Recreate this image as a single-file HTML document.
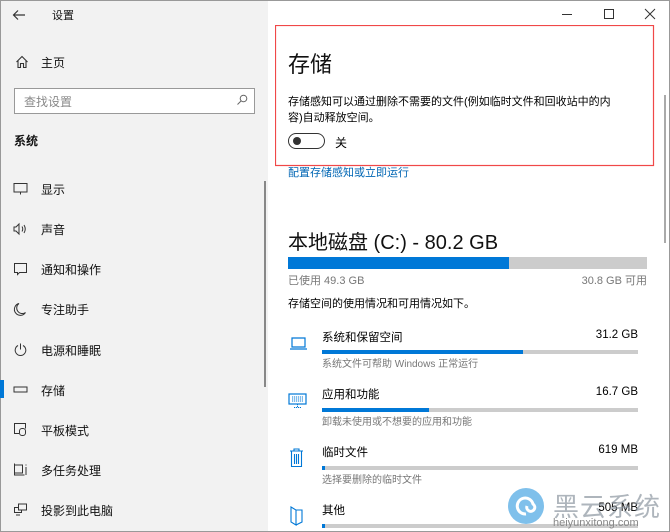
<!DOCTYPE html>
<html><head><meta charset="utf-8"><style>
*{margin:0;padding:0;box-sizing:border-box}
body{width:670px;height:532px;overflow:hidden;font-family:"Liberation Sans","Noto Sans CJK SC",sans-serif;background:#fff;position:relative;color:#000}
.a{position:absolute;white-space:nowrap}
#left{position:absolute;left:0;top:0;width:268px;height:532px;background:#f2f2f2}
.nav{font-size:12px;color:#111}
.g{color:#777}
.bar{position:absolute;height:4px;background:#ccc}
.bar i{position:absolute;left:0;top:0;height:4px;background:#0078d7}
svg{position:absolute}
</style></head><body>
<div id="left"></div>
<div class="a" style="left:0;top:0;width:670px;height:532px;border:1px solid #999;"></div>
<svg style="left:12px;top:8px" width="14" height="14" viewBox="0 0 14 14"><path d="M13 7H2M6 2.5L1.5 7 6 11.5" stroke="#333" stroke-width="1.2" fill="none"/></svg>
<div class="a nav" style="left:52px;top:7px;font-size:11px">设置</div>
<svg style="left:15px;top:55px" width="14" height="14" viewBox="0 0 14 14"><path d="M1.5 7L7 1.5 12.5 7M3 5.5V12.5H5.5V8.5H8.5V12.5H11V5.5" stroke="#333" stroke-width="1.1" fill="none"/></svg>
<div class="a nav" style="left:41px;top:54px">主页</div>
<div class="a" style="left:14px;top:88px;width:241px;height:26px;border:1px solid #999;background:#fff"></div>
<div class="a g" style="left:24px;top:93px;font-size:12px;color:#888">查找设置</div>
<svg style="left:236px;top:94px" width="12" height="12" viewBox="0 0 12 12"><circle cx="7.5" cy="4.5" r="3.3" stroke="#666" fill="none"/><path d="M5 7L1.5 10.5" stroke="#666"/></svg>
<div class="a nav" style="left:14px;top:132px;font-weight:bold">系统</div>
<div class="a" style="left:264px;top:181px;width:2px;height:206px;background:#888"></div>
<div class="a" style="left:0;top:380px;width:4px;height:18px;background:#0078d7"></div>
<svg style="left:13px;top:182px" width="16" height="14" viewBox="0 0 16 14"><rect x="1" y="1.5" width="13" height="8.5" stroke="#333" fill="none"/><path d="M7.5 10v2.5" stroke="#333"/></svg>
<div class="a nav" style="left:41px;top:181px">显示</div>
<svg style="left:13px;top:222px" width="16" height="14" viewBox="0 0 16 14"><path d="M1 5h2l3-3v10l-3-3H1z M9 4.5q1.5 2.5 0 5 M11 3q2.5 4 0 8" stroke="#333" fill="none"/></svg>
<div class="a nav" style="left:41px;top:221px">声音</div>
<svg style="left:13px;top:262px" width="16" height="14" viewBox="0 0 16 14"><path d="M1.5 1.5h12v9h-7l-2 2v-2h-3z" stroke="#333" fill="none"/></svg>
<div class="a nav" style="left:41px;top:261px">通知和操作</div>
<svg style="left:13px;top:302px" width="16" height="14" viewBox="0 0 16 14"><path d="M6 1.5a6 6 0 1 0 6.5 9A5 5 0 0 1 6 1.5z" stroke="#333" fill="none"/></svg>
<div class="a nav" style="left:41px;top:301px">专注助手</div>
<svg style="left:13px;top:342px" width="16" height="16" viewBox="0 0 16 16"><path d="M5 3.5a5.3 5.3 0 1 0 5 0M7.5 1.5v6" stroke="#333" fill="none"/></svg>
<div class="a nav" style="left:41px;top:342px">电源和睡眠</div>
<svg style="left:13px;top:385px" width="16" height="10" viewBox="0 0 16 10"><rect x="1" y="2" width="13" height="5" stroke="#333" fill="none"/></svg>
<div class="a nav" style="left:41px;top:382px">存储</div>
<svg style="left:13px;top:422px" width="16" height="16" viewBox="0 0 16 16"><path d="M6 11.5H1.5v-10h11v5" stroke="#333" fill="none"/><rect x="6.5" y="6.5" width="6" height="7" rx="2.5" stroke="#333" fill="none"/></svg>
<div class="a nav" style="left:41px;top:422px">平板模式</div>
<svg style="left:13px;top:462px" width="16" height="16" viewBox="0 0 16 16"><path d="M1.5 1.5v12M1.5 3h8v8h-8M1.5 13h10M13 5v8M13 2.5v1" stroke="#333" fill="none"/></svg>
<div class="a nav" style="left:41px;top:462px">多任务处理</div>
<svg style="left:13px;top:502px" width="16" height="16" viewBox="0 0 16 16"><rect x="5.5" y="2" width="8" height="6" stroke="#333" fill="none"/><path d="M5.5 5.5h-4v5h7V8M3 13h4" stroke="#333" fill="none"/></svg>
<div class="a nav" style="left:41px;top:502px">投影到此电脑</div>

<div class="a" style="left:562px;top:14px;width:10px;height:1px;background:#333"></div>
<div class="a" style="left:604px;top:9px;width:10px;height:10px;border:1px solid #333"></div>
<svg style="left:644px;top:8px" width="12" height="12" viewBox="0 0 12 12"><path d="M1 1l10 10M11 1L1 11" stroke="#333"/></svg>
<div class="a" style="left:664px;top:95px;width:2px;height:148px;background:#aaa"></div>

<svg style="left:275px;top:25px" width="380" height="142"><rect x="0.5" y="0.5" width="378" height="140" fill="none" stroke="#f04848" stroke-width="1.2"/></svg>
<div class="a" style="left:288px;top:47px;font-size:22px;color:#111">存储</div>
<div class="a" style="left:288px;top:94px;font-size:11px;line-height:16px">存储感知可以通过删除不需要的文件(例如临时文件和回收站中的内<br>容)自动释放空间。</div>
<div class="a" style="left:288px;top:133px;width:37px;height:16px;border:1.5px solid #333;border-radius:8px"></div>
<div class="a" style="left:293px;top:137px;width:8px;height:8px;border-radius:50%;background:#333"></div>
<div class="a" style="left:335px;top:134px;font-size:12px">关</div>
<div class="a" style="left:288px;top:164px;font-size:11px;color:#0066b4">配置存储感知或立即运行</div>
<div class="a" style="left:288px;top:226px;font-size:20px;color:#111">本地磁盘 (C:) - 80.2 GB</div>
<div class="a" style="left:288px;top:257px;width:359px;height:12px;background:#ccc"></div>
<div class="a" style="left:288px;top:257px;width:221px;height:12px;background:#0078d7"></div>
<div class="a g" style="left:288px;top:272px;font-size:11px">已使用 49.3 GB</div>
<div class="a g" style="right:23px;top:272px;font-size:11px">30.8 GB 可用</div>
<div class="a" style="left:288px;top:295px;font-size:11px">存储空间的使用情况和可用情况如下。</div>

<svg style="left:289px;top:336px" width="20" height="16" viewBox="0 0 20 16"><path d="M3 2h13v9H3zM1 13h17" stroke="#0078d7" stroke-width="1.2" fill="none"/></svg>
<div class="a" style="left:322px;top:329px;font-size:11.5px">系统和保留空间</div>
<div class="a" style="right:32px;top:329px;font-size:11.5px">31.2 GB</div>
<div class="bar" style="left:322px;top:350px;width:316px"><i style="width:201px"></i></div>
<div class="a g" style="left:322px;top:355px;font-size:10px">系统文件可帮助 Windows 正常运行</div>

<svg style="left:288px;top:393px" width="20" height="16" viewBox="0 0 20 16"><rect x="1" y="1" width="17" height="10" stroke="#0078d7" stroke-width="1.2" fill="none"/><path d="M4 4h11M4 6h11M4 8h11M9.5 11v3M6 14.5h7" stroke="#0078d7" stroke-dasharray="1.2 0.8" fill="none"/></svg>
<div class="a" style="left:322px;top:386px;font-size:11.5px">应用和功能</div>
<div class="a" style="right:32px;top:386px;font-size:11.5px">16.7 GB</div>
<div class="bar" style="left:322px;top:408px;width:316px"><i style="width:107px"></i></div>
<div class="a g" style="left:322px;top:413px;font-size:10px">卸载未使用或不想要的应用和功能</div>

<svg style="left:289px;top:448px" width="16" height="20" viewBox="0 0 16 20"><path d="M1 3h13M5 3V1h5v2M2.5 3.5V18.5h10V3.5M5.5 6v10M7.5 6v10M9.5 6v10" stroke="#0078d7" stroke-width="1.1" fill="none"/></svg>
<div class="a" style="left:322px;top:444px;font-size:11.5px">临时文件</div>
<div class="a" style="right:32px;top:444px;font-size:11.5px">619 MB</div>
<div class="bar" style="left:322px;top:466px;width:316px"><i style="width:3px"></i></div>
<div class="a g" style="left:322px;top:471px;font-size:10px">选择要删除的临时文件</div>

<svg style="left:289px;top:505px" width="16" height="22" viewBox="0 0 16 22"><path d="M2 2l5 3v15l-5-3zM7 5h6v12l-6 3" stroke="#0078d7" stroke-width="1.1" fill="none"/></svg>
<div class="a" style="left:322px;top:502px;font-size:11.5px">其他</div>
<div class="a" style="right:32px;top:502px;font-size:11.5px">505 MB</div>
<div class="bar" style="left:322px;top:524px;width:316px"><i style="width:3px"></i></div>

<div class="a" style="left:508px;top:488px;width:36px;height:36px;border-radius:50%;background:#5fb0e6;opacity:.8"></div>
<svg style="left:508px;top:488px" width="36" height="36" viewBox="0 0 36 36"><path d="M18 26a8 8 0 1 1 7-10 4 4 0 1 1-6 2" stroke="#fff" stroke-width="3" fill="none"/></svg>
<div class="a" style="left:553px;top:487px;font-size:26px;color:rgba(140,150,160,.7);letter-spacing:1px">黑云系统</div>
<div class="a" style="left:553px;top:517px;font-size:11px;color:#888">heiyunxitong.com</div>
</body></html>
